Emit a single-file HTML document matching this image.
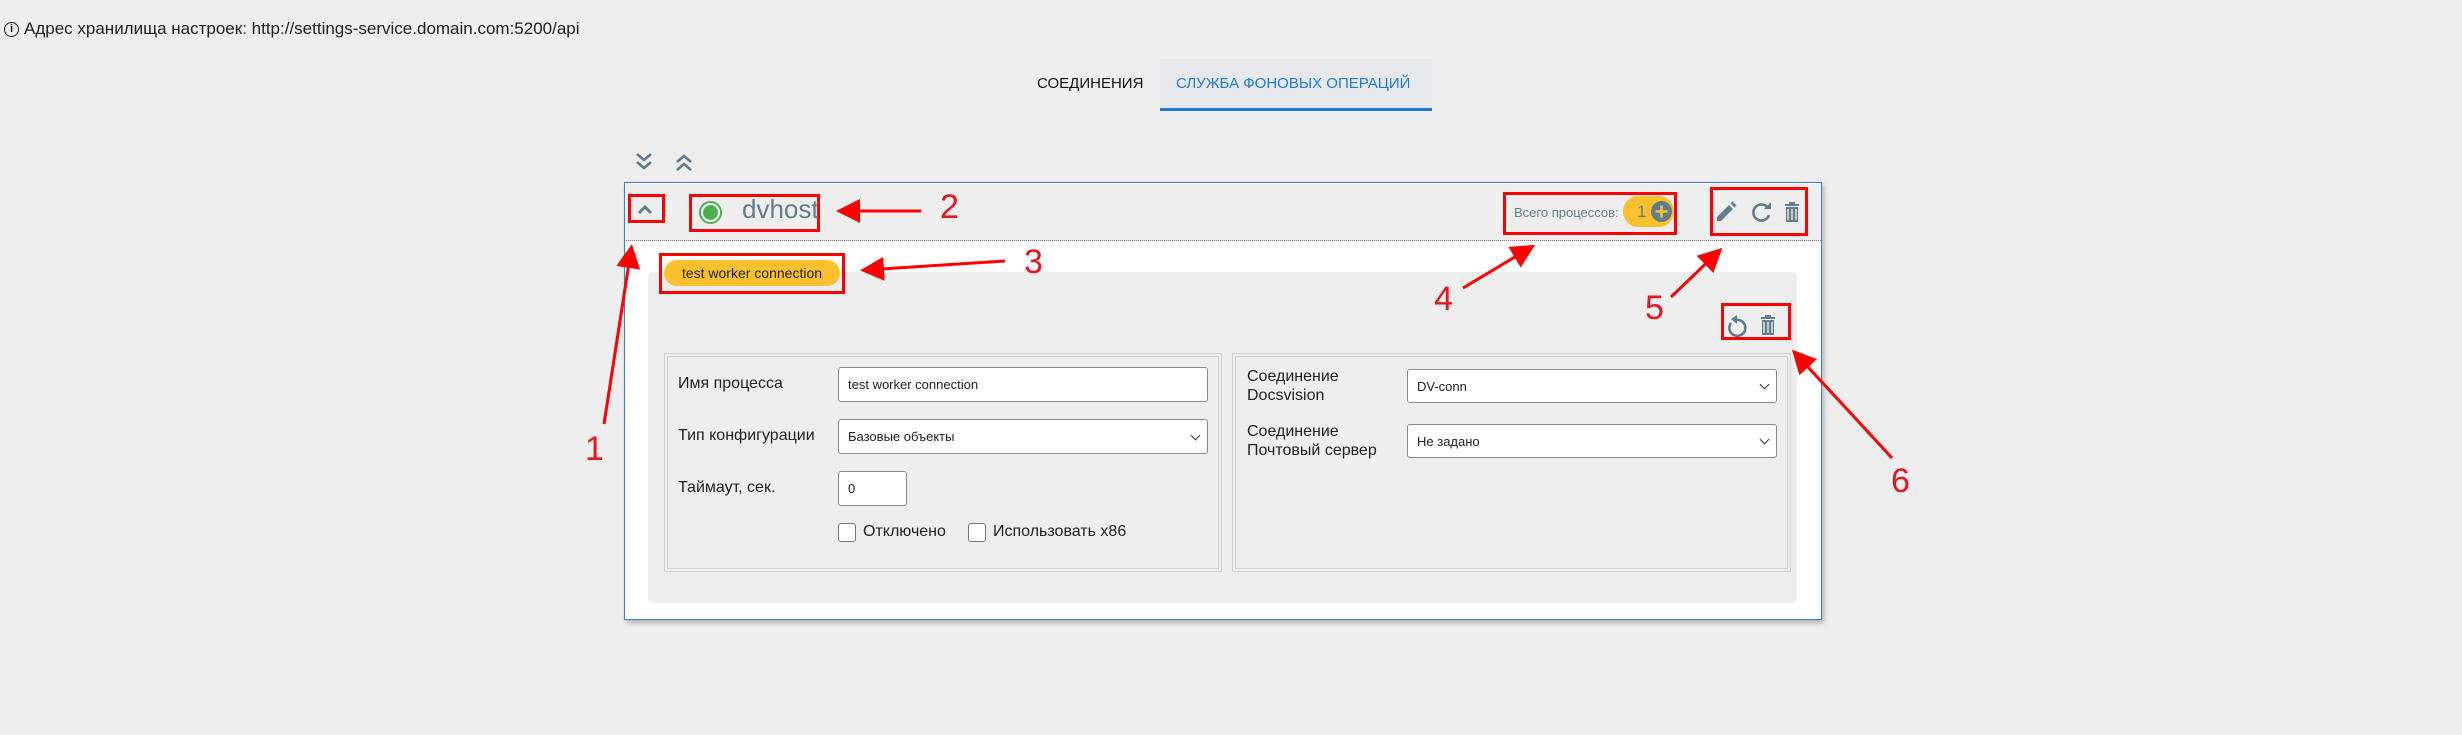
<!DOCTYPE html>
<html><head><meta charset="utf-8"><style>
*{box-sizing:border-box;margin:0;padding:0}
body{width:2462px;height:735px;background:#eeeeee;position:relative;overflow:hidden;font-family:"Liberation Sans",sans-serif;color:#212121}
.a{position:absolute}
.rb{position:absolute;border:3px solid #f00}
.num{position:absolute;color:#e8141e;font-size:34px;font-family:"Liberation Sans",sans-serif}
input,select{font-family:"Liberation Sans",sans-serif}
.inp{position:absolute;background:#fff;border:1px solid #8a8a8a;border-radius:3px;font-size:13px;padding-left:9px;display:flex;align-items:center}
.chev{position:absolute;right:8px;top:50%;margin-top:-5px;width:7px;height:7px;border-right:1.3px solid #333;border-bottom:1.3px solid #333;transform:rotate(45deg)}
.lbl{position:absolute;font-size:16px;color:#212121}
.cb{position:absolute;width:18px;height:19px;border:1px solid #777;border-radius:3px;background:#fff}
</style></head><body>
<div class="a" style="left:4px;top:19px;font-size:17px;display:flex;align-items:center"><span style="display:inline-block;width:15px;height:15px;border:1.5px solid #222;border-radius:50%;font-size:11px;text-align:center;line-height:12px;font-weight:bold;margin-right:5px">i</span>Адрес хранилища настроек: http://settings-service.domain.com:5200/api</div>

<div class="a" style="left:1037px;top:75px;font-size:15px;color:#111">СОЕДИНЕНИЯ</div>
<div class="a" style="left:1160px;top:59px;width:272px;height:52px;background:#e6e8eb;border-bottom:3px solid #1e7bd6"></div>
<div class="a" style="left:1176px;top:75px;font-size:15px;color:#1e7bd6">СЛУЖБА ФОНОВЫХ ОПЕРАЦИЙ</div>

<svg class="a" style="left:634px;top:150px" width="70" height="24" viewBox="0 0 70 24"><g fill="none" stroke="#607d8b" stroke-width="2.6"><path d="M3 4l7 6 7-6M3 12l7 6 7-6"/><path d="M43 12l7-6 7 6M43 20l7-6 7 6"/></g></svg>

<div class="a" style="left:624px;top:182px;width:1198px;height:438px;background:#fff;border:1.5px solid #3c7fd0;box-shadow:2px 3px 5px rgba(0,0,0,.25)"></div>
<div class="a" style="left:626px;top:184px;width:1195px;height:57px;background:#eeeeee;border-bottom:1.5px dotted #777"></div>
<svg class="a" style="left:637px;top:203px" width="16" height="12"><path d="M2 10l6-6 6 6" fill="none" stroke="#607d8b" stroke-width="3"/></svg>
<div class="a" style="left:699px;top:201px;width:23px;height:23px;border-radius:50%;border:2.5px solid #4caf50;background:#fff"></div>
<div class="a" style="left:703px;top:205px;width:15px;height:15px;border-radius:50%;background:#4caf50"></div>
<div class="a" style="left:742px;top:194px;font-size:26px;color:#607d8b">dvhost</div>

<div class="a" style="left:1514px;top:205px;font-size:13px;color:#607d8b">Всего процессов:</div>
<div class="a" style="left:1623px;top:196px;width:51px;height:31px;border-radius:16px;background:#fbc02d"></div>
<div class="a" style="left:1637px;top:202px;font-size:17px;color:#607d8b">1</div>
<div class="a" style="left:1651px;top:201px;width:21px;height:21px;border-radius:50%;background:#607d8b"></div>
<svg class="a" style="left:1651px;top:201px" width="21" height="21"><path d="M10.5 4.5v12M4.5 10.5h12" stroke="#fbc02d" stroke-width="2.6"/></svg>

<svg class="a" style="left:1715px;top:200px" width="100" height="26" viewBox="0 0 100 26"><g fill="#607d8b"><path d="M2 21v-4l12-12 4 4-12 12z M15.5 3.5l2-2 4 4-2 2z"/><path d="M70 4h14v2h-14z M74 2h6v2h-6z M71 7h12v15h-12z"/></g><path d="M73 9v11M77 9v11M81 9v11" stroke="#eee" stroke-width="1.4"/><path d="M53 8a8 8 0 1 0 1 7" fill="none" stroke="#607d8b" stroke-width="2.6"/><path d="M49 9h7v-7z" fill="#607d8b"/></svg>

<div class="a" style="left:648px;top:272px;width:1149px;height:331px;background:#eeeeee;border-radius:5px"></div>
<div class="a" style="left:664px;top:260px;width:176px;height:26px;border-radius:13px;background:#fbc02d;font-size:14px;text-align:center;line-height:26px">test worker connection</div>

<svg class="a" style="left:1725px;top:313px" width="60" height="26" viewBox="0 0 60 26"><path d="M6 10a8 8 0 1 0 5-3" fill="none" stroke="#607d8b" stroke-width="2.6"/><path d="M12 2v9l-6-5z" fill="#607d8b"/><g fill="#607d8b"><path d="M36 4h14v2h-14z M40 2h6v2h-6z M37 7h12v15h-12z"/></g><path d="M39 9v11M43 9v11M47 9v11" stroke="#eee" stroke-width="1.4"/></svg>

<div class="a" style="left:664px;top:353px;width:558px;height:219px;border:1.5px solid #d0d0d0"></div>
<div class="a" style="left:667px;top:356px;width:552px;height:213px;border:1.5px solid #d0d0d0"></div>
<div class="a" style="left:1232px;top:353px;width:559px;height:219px;border:1.5px solid #d0d0d0"></div>
<div class="a" style="left:1235px;top:356px;width:553px;height:213px;border:1.5px solid #d0d0d0"></div>

<div class="lbl" style="left:678px;top:375px">Имя процесса</div>
<div class="inp" style="left:838px;top:367px;width:370px;height:35px">test worker connection</div>
<div class="lbl" style="left:678px;top:427px">Тип конфигурации</div>
<div class="inp" style="left:838px;top:419px;width:370px;height:35px">Базовые объекты<span class="chev"></span></div>
<div class="lbl" style="left:678px;top:479px">Таймаут, сек.</div>
<div class="inp" style="left:838px;top:471px;width:69px;height:35px">0</div>
<div class="cb" style="left:838px;top:523px"></div>
<div class="lbl" style="left:863px;top:523px">Отключено</div>
<div class="cb" style="left:968px;top:523px"></div>
<div class="lbl" style="left:993px;top:523px">Использовать x86</div>

<div class="lbl" style="left:1247px;top:367px;line-height:19px">Соединение<br>Docsvision</div>
<div class="inp" style="left:1407px;top:369px;width:370px;height:34px">DV-conn<span class="chev"></span></div>
<div class="lbl" style="left:1247px;top:422px;line-height:19px">Соединение<br>Почтовый сервер</div>
<div class="inp" style="left:1407px;top:424px;width:370px;height:34px">Не задано<span class="chev"></span></div>

<div class="rb" style="left:628px;top:194px;width:37px;height:29px"></div>
<div class="rb" style="left:689px;top:194px;width:131px;height:38px"></div>
<div class="rb" style="left:659px;top:253px;width:186px;height:41px"></div>
<div class="rb" style="left:1503px;top:192px;width:174px;height:43px"></div>
<div class="rb" style="left:1710px;top:187px;width:98px;height:49px"></div>
<div class="rb" style="left:1721px;top:303px;width:70px;height:37px"></div>

<svg class="a" style="left:0;top:0" width="2462" height="735"><defs><marker id="m" markerWidth="8" markerHeight="8" refX="6" refY="4" orient="auto" markerUnits="strokeWidth"><path d="M0 0L8 4L0 8z" fill="#f00"/></marker></defs><g stroke="#f00" stroke-width="3" marker-end="url(#m)"><line x1="604" y1="424" x2="631" y2="250"/><line x1="921" y1="211" x2="842" y2="211"/><line x1="1005" y1="261" x2="866" y2="270"/><line x1="1463" y1="288" x2="1530" y2="248"/><line x1="1671" y1="297" x2="1718" y2="252"/><line x1="1892" y1="458" x2="1796" y2="354"/></g></svg>
<div class="num" style="left:585px;top:430px">1</div>
<div class="num" style="left:940px;top:188px">2</div>
<div class="num" style="left:1024px;top:243px">3</div>
<div class="num" style="left:1434px;top:280px">4</div>
<div class="num" style="left:1645px;top:289px">5</div>
<div class="num" style="left:1891px;top:462px">6</div>
</body></html>
